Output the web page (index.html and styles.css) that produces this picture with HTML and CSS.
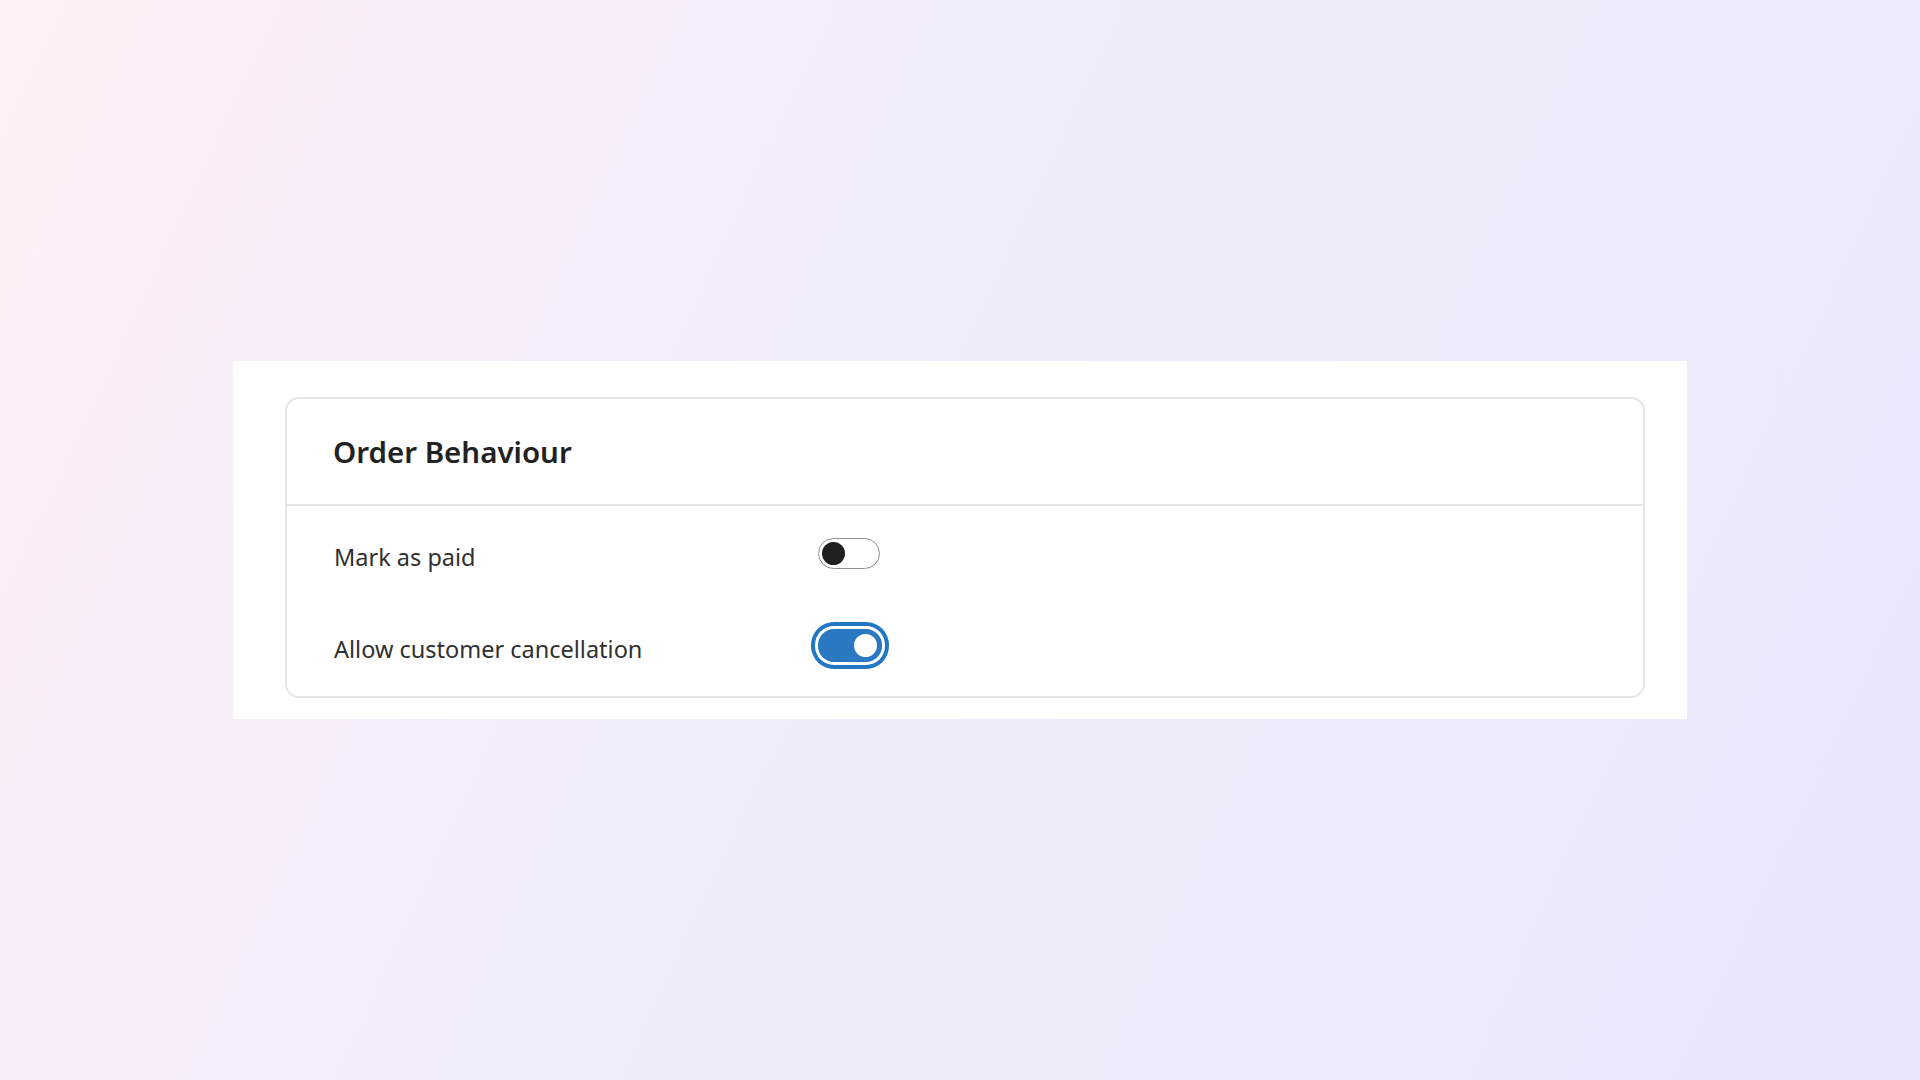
FILE: index.html
```html
<!DOCTYPE html>
<html lang="en">
<head>
<meta charset="utf-8">
<title>Order Behaviour</title>
<link rel="stylesheet" href="styles.css">
</head>
<body>
<main class="stage">
  <section class="panel">
    <div class="card">
      <header class="card-header">
        <h2 class="card-title">Order Behaviour</h2>
      </header>
      <div class="card-body">
        <div class="row">
          <span class="row-label">Mark as paid</span>
          <span class="switch" role="switch" aria-checked="false"><span class="thumb"></span></span>
        </div>
        <div class="row">
          <span class="row-label">Allow customer cancellation</span>
          <span class="switch is-on is-focused" role="switch" aria-checked="true"><span class="thumb"></span></span>
        </div>
      </div>
    </div>
  </section>
</main>
</body>
</html>
```
FILE: styles.css
```css
* { box-sizing: border-box; }
html, body { margin: 0; padding: 0; }
body {
  width: 1920px;
  height: 1080px;
  font-family: "Noto Sans", "Open Sans", sans-serif;
  color: #242424;
  background: linear-gradient(115deg, #fdf0f8 0%, #f1ebfa 45%, #e8e8fb 100%);
  overflow: hidden;
}
.stage {
  height: 100%;
  padding-top: 361px;
  padding-left: 233px;
}
.panel {
  width: 1454px;
  height: 358px;
  background: #ffffff;
  padding: 36px 42px 21px 52px;
}
.card {
  border: 2px solid #e6e6e6;
  border-radius: 14px;
  height: 301px;
  display: flex;
  flex-direction: column;
}
.card-header {
  height: 107px;
  flex: none;
  border-bottom: 2px solid #e6e6e6;
  display: flex;
  align-items: center;
  padding-left: 46px;
}
.card-title {
  margin: 0;
  font-size: 29.5px;
  font-weight: 600;
  color: #222222;
}
.card-body {
  padding: 28px 0 0 47px;
  display: flex;
  flex-direction: column;
  gap: 60px;
}
.row {
  display: grid;
  grid-template-columns: 484px auto;
  align-items: center;
  height: 32px;
}
.row-label {
  font-size: 23.5px;
  color: #303030;
  line-height: 32px;
  margin-top: 7px;
}
.switch {
  position: relative;
  display: block;
  width: 62px;
  height: 31px;
  border-radius: 16px;
  border: 1.5px solid #8f8f8f;
  background: #fff;
}
.switch .thumb {
  position: absolute;
  top: 2.5px;
  left: 2.5px;
  width: 23px;
  height: 23px;
  border-radius: 50%;
  background: #1f1f1f;
}
.switch.is-on {
  width: 64px;
  height: 33px;
  border: none;
  background: #2a78c2;
}
.switch.is-on .thumb {
  top: 5px;
  left: auto;
  right: 5px;
  background: #ffffff;
}
.switch.is-focused {
  box-shadow: 0 0 0 3px #ffffff, 0 0 0 7px #2276c4;
}
```
